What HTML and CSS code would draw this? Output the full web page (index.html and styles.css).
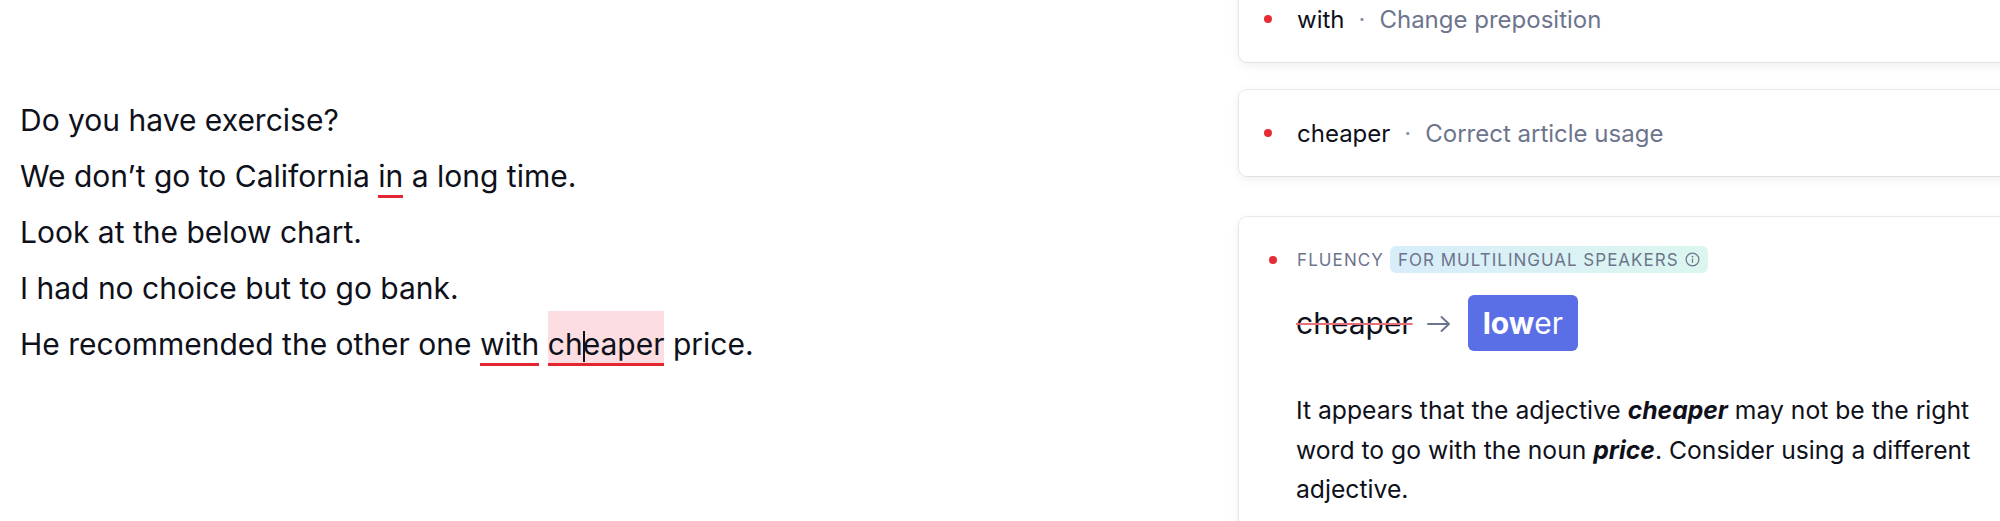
FILE: index.html
```html
<!DOCTYPE html>
<html>
<head>
    <meta charset="utf-8">
    <title>Fluency check</title>
    <link rel="stylesheet" href="styles.css">
</head>
<body>
<div class="page">
    <div class="editor">
        <p class="line">Do you have exercise?</p>
        <p class="line">We don’t go to California <span class="mistake">in</span> a long time.</p>
        <p class="line">Look at the below chart.</p>
        <p class="line">I had no choice but to go bank.</p>
        <p class="line">He recommended the other one <span class="mistake">with</span> <span class="mistake active">ch<span class="caret"></span>eaper</span> price.</p>
    </div>

    <div class="sidebar">
        <div class="card compact">
            <span class="dot"></span>
            <span class="word">with</span>
            <span class="sep">·</span>
            <span class="hint">Change preposition</span>
        </div>

        <div class="card compact">
            <span class="dot"></span>
            <span class="word">cheaper</span>
            <span class="sep">·</span>
            <span class="hint">Correct article usage</span>
        </div>

        <div class="card open">
            <div class="card-head">
                <span class="dot"></span>
                <span class="category">Fluency</span>
                <span class="badge">For multilingual speakers
                    <svg class="info" width="15" height="15" viewBox="0 0 16 16">
                        <circle cx="8" cy="8" r="6.8" fill="none" stroke="currentColor" stroke-width="1.3"/>
                        <circle cx="8" cy="4.9" r="0.95" fill="currentColor"/>
                        <rect x="7.35" y="6.8" width="1.3" height="4.8" rx="0.5" fill="currentColor"/>
                    </svg>
                </span>
            </div>
            <div class="card-body">
                <div class="replace">
                    <span class="old">cheaper</span>
                    <span class="arrow">
                        <svg width="28" height="20" viewBox="0 0 28 20">
                            <path d="M3 10h21M16.5 3l7.5 7-7.5 7" fill="none" stroke="currentColor" stroke-width="1.9" stroke-linecap="round" stroke-linejoin="round"/>
                        </svg>
                    </span>
                    <span class="suggestion"><b>low</b>er</span>
                </div>
                <p class="explain">It appears that the adjective <em>cheaper</em> may not be the right word to go with the noun <em>price</em>. Consider using a different adjective.</p>
            </div>
        </div>
    </div>
</div>
</body>
</html>
```

FILE: styles.css
```css
html, body {
    margin: 0;
    padding: 0;
    background: #ffffff;
    height: 100%;
    overflow: hidden;
}

body {
    font-family: Inter, "Noto Sans", sans-serif;
    color: #0e101a;
}

.page {
    display: flex;
    width: 2000px;
    height: 521px;
    overflow: hidden;
}

/* text editor on the left */
.editor {
    width: 1239px;
    flex: none;
    box-sizing: border-box;
    padding: 92px 0 0 20px;
}
.line {
    margin: 0;
    font-size: 30px;
    line-height: 56px;
    white-space: nowrap;
}
.mistake {
    border-bottom: 3px solid #e3262f;
    padding-bottom: 1px;
}
.mistake.active {
    background: #fcdde2;
    padding-top: 15px;
}
.caret {
    display: inline-block;
    width: 0;
    height: 31px;
    border-left: 2px solid #0e101a;
    margin-right: -2px;
    vertical-align: -7px;
}

/* suggestion cards on the right */
.sidebar {
    flex: none;
    width: 800px;
    margin-top: -24px;
    display: flex;
    flex-direction: column;
    gap: 28px;
}
.card {
    flex: none;
    background: #ffffff;
    border-radius: 8px;
    box-shadow: 0 0 0 1px rgba(0, 0, 0, 0.07), 0 3px 12px rgba(0, 0, 0, 0.07);
}
.dot {
    width: 8px;
    height: 8px;
    border-radius: 50%;
    background: #e52b36;
    flex: none;
}

.compact {
    height: 86px;
    display: flex;
    align-items: center;
    padding-left: 25px;
    font-size: 24px;
}
.compact .dot {
    margin-right: 25px;
}
.sep {
    color: #8a90a4;
    margin: 0 14px;
}
.hint {
    color: #6d758d;
}

.open {
    margin-top: 13px;
    height: 360px;
    padding-top: 29px;
}
.card-head {
    display: flex;
    align-items: center;
    padding-left: 30px;
    height: 27px;
}
.card-head .dot {
    margin-right: 20px;
}
.category {
    font-size: 17px;
    letter-spacing: 1.1px;
    text-transform: uppercase;
    color: #6d758d;
    margin-right: 6px;
}
.badge {
    display: flex;
    align-items: center;
    gap: 6px;
    height: 27px;
    padding: 0 8px;
    border-radius: 6px;
    background: linear-gradient(90deg, #d7edfa, #dcf6ef);
    font-size: 17px;
    letter-spacing: 1px;
    text-transform: uppercase;
    color: #6d758d;
}
.info {
    display: block;
}

.card-body {
    padding-left: 57px;
    width: 700px;
}
.replace {
    display: flex;
    align-items: center;
    margin-top: 22px;
    height: 56px;
}
.old {
    font-size: 30px;
    text-decoration: line-through;
    text-decoration-color: #e8707a;
    text-decoration-thickness: 2px;
}
.arrow {
    color: #6d758d;
    margin: 2px 15px 0 12px;
    display: flex;
}
.suggestion {
    height: 56px;
    display: flex;
    align-items: center;
    padding: 0 15px;
    background: #5a6fe6;
    border-radius: 6px;
    color: #ffffff;
    font-size: 30px;
}
.suggestion b {
    font-weight: 700;
}
.explain {
    margin: 40px 0 0;
    font-size: 24.7px;
    line-height: 39.5px;
}
.explain em {
    font-weight: 700;
}
```
